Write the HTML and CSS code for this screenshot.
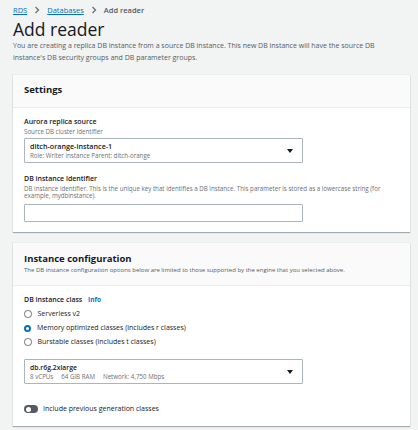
FILE: index.html
```html
<!DOCTYPE html>
<html lang="en">
<head>
    <meta charset="UTF-8">
    <title>Add reader</title>
    <link rel="stylesheet" href="styles.css">
</head>
<body>
    <div class="page">
        <nav class="crumbs">
            <a href="#">RDS</a>
            <svg class="sep" width="6" height="8" viewBox="0 0 6 8"><path d="M1.5 1 L4.5 4 L1.5 7" fill="none" stroke="#687078" stroke-width="1.3"/></svg>
            <a href="#">Databases</a>
            <svg class="sep" width="6" height="8" viewBox="0 0 6 8"><path d="M1.5 1 L4.5 4 L1.5 7" fill="none" stroke="#687078" stroke-width="1.3"/></svg>
            <span class="current">Add reader</span>
        </nav>

        <h1>Add reader</h1>
        <p class="intro">You are creating a replica DB instance from a source DB instance. This new DB instance will have the source DB instance's DB security groups and DB parameter groups.</p>

        <!-- Settings -->
        <section class="card">
            <div class="card-head">
                <h2>Settings</h2>
            </div>
            <div class="card-body">
                <div class="field">
                    <div class="label">Aurora replica source</div>
                    <div class="hint">Source DB cluster identifier</div>
                    <div class="select">
                        <div>
                            <div class="value">ditch-orange-instance-1</div>
                            <div class="sub">Role: Writer instance Parent: ditch-orange</div>
                        </div>
                        <span class="caret"></span>
                    </div>
                </div>
                <div class="field">
                    <div class="label">DB instance identifier</div>
                    <div class="hint">DB instance identifier. This is the unique key that identifies a DB instance. This parameter is stored as a lowercase string (for example, mydbinstance).</div>
                    <input type="text" class="input">
                </div>
            </div>
        </section>

        <!-- Instance configuration -->
        <section class="card">
            <div class="card-head second">
                <h2>Instance configuration</h2>
                <div class="head-desc">The DB instance configuration options below are limited to those supported by the engine that you selected above.</div>
            </div>
            <div class="card-body last">
                <div class="label">DB instance class <a href="#" class="info">Info</a></div>
                <div class="radios">
                    <label class="radio"><span class="dot"></span>Serverless v2</label>
                    <label class="radio"><span class="dot on"></span>Memory optimized classes (includes r classes)</label>
                    <label class="radio"><span class="dot"></span>Burstable classes (includes t classes)</label>
                </div>
                <div class="select">
                    <div>
                        <div class="value small">db.r6g.2xlarge</div>
                        <div class="sub specs"><span>8 vCPUs</span><span>64 GiB RAM</span><span>Network: 4,750 Mbps</span></div>
                    </div>
                    <span class="caret"></span>
                </div>
                <div class="toggle-row">
                    <span class="toggle"></span>
                    Include previous generation classes
                </div>
            </div>
        </section>
    </div>
</body>
</html>
```

FILE: styles.css
```css
body {
    margin: 0;
    background: #f2f3f3;
    font-family: 'Open Sans', 'Noto Sans', sans-serif;
    color: #16191f;
}

.page {
    padding: 5px 8px 0 13px;
}

.crumbs {
    font-size: 7.5px;
    line-height: 10px;
    display: flex;
    align-items: center;
    gap: 6px;
    height: 10px;
}

.crumbs a {
    color: #0073bb;
    text-decoration: underline;
}

.crumbs .sep {
    display: block;
    margin: 0 1px;
}

.crumbs .current {
    color: #545b64;
    font-weight: 600;
}

h1 {
    font-size: 17.5px;
    font-weight: 400;
    margin: 3px 0 0;
    line-height: 22px;
}

.intro {
    font-size: 7px;
    color: #545b64;
    line-height: 12px;
    margin: 0 0 11px;
    max-width: 370px;
}

.card {
    background: #fff;
    box-shadow: 0 1px 1px rgba(0, 22, 40, 0.3), 0 0 0 1px #eaeded;
    margin-bottom: 11px;
}

.card-head {
    background: #fafafa;
    border-bottom: 1px solid #eaeded;
    padding: 8px 11px 10px;
}

.card-head.second {
    padding-top: 9px;
}

.card-head h2 {
    font-size: 9.5px;
    font-weight: 700;
    margin: 0;
    line-height: 14px;
}

.head-desc {
    font-size: 6px;
    color: #545b64;
    line-height: 9px;
}

.card-body {
    padding: 9px 11px 10px;
}

.card-body.last {
    padding-bottom: 12px;
}

.field + .field {
    margin-top: 11px;
}

.label {
    font-size: 7px;
    font-weight: 600;
    line-height: 10px;
    color: #16191f;
}

.hint {
    font-size: 6.2px;
    color: #687078;
    line-height: 7px;
    margin: 1px 0 3px;
}

.select {
    width: 279px;
    height: 25px;
    border: 1px solid #aab7b8;
    border-radius: 1px;
    padding: 0 9px 0 5px;
    display: flex;
    align-items: center;
    justify-content: space-between;
    box-sizing: border-box;
}

.value {
    font-size: 7.2px;
    font-weight: 600;
    line-height: 9px;
}

.value.small {
    font-size: 6.8px;
}

.sub {
    font-size: 6.2px;
    color: #687078;
    line-height: 9px;
}

.specs {
    display: flex;
    gap: 8px;
}

.caret {
    width: 0;
    height: 0;
    border-left: 3.5px solid transparent;
    border-right: 3.5px solid transparent;
    border-top: 4px solid #16191f;
}

.input {
    display: block;
    width: 279px;
    height: 18px;
    box-sizing: border-box;
    border: 1px solid #aab7b8;
    border-radius: 1px;
    margin: 5px 0 0;
}

.info {
    color: #0073bb;
    font-size: 6.5px;
    font-weight: 700;
    text-decoration: none;
    margin-left: 4px;
}

.radios {
    margin: 2px 0 10px;
}

.radio {
    display: flex;
    align-items: center;
    font-size: 7px;
    line-height: 14px;
    color: #16191f;
}

.dot {
    width: 5.5px;
    height: 5.5px;
    border: 1.3px solid #687078;
    border-radius: 50%;
    margin-right: 6px;
    background: #fff;
}

.dot.on {
    border: 2.5px solid #0073bb;
    width: 3px;
    height: 3px;
}

.toggle-row {
    display: flex;
    align-items: center;
    font-size: 7px;
    line-height: 10px;
    margin-top: 20px;
    color: #16191f;
}

.toggle {
    width: 14px;
    height: 8px;
    border-radius: 4px;
    background: #545b64;
    margin-right: 5px;
    position: relative;
}

/* knob sits over the track */
.toggle::after {
    content: "";
    position: absolute;
    left: 1.5px;
    top: 1.5px;
    width: 5px;
    height: 5px;
    border-radius: 50%;
    background: #fff;
}
```
